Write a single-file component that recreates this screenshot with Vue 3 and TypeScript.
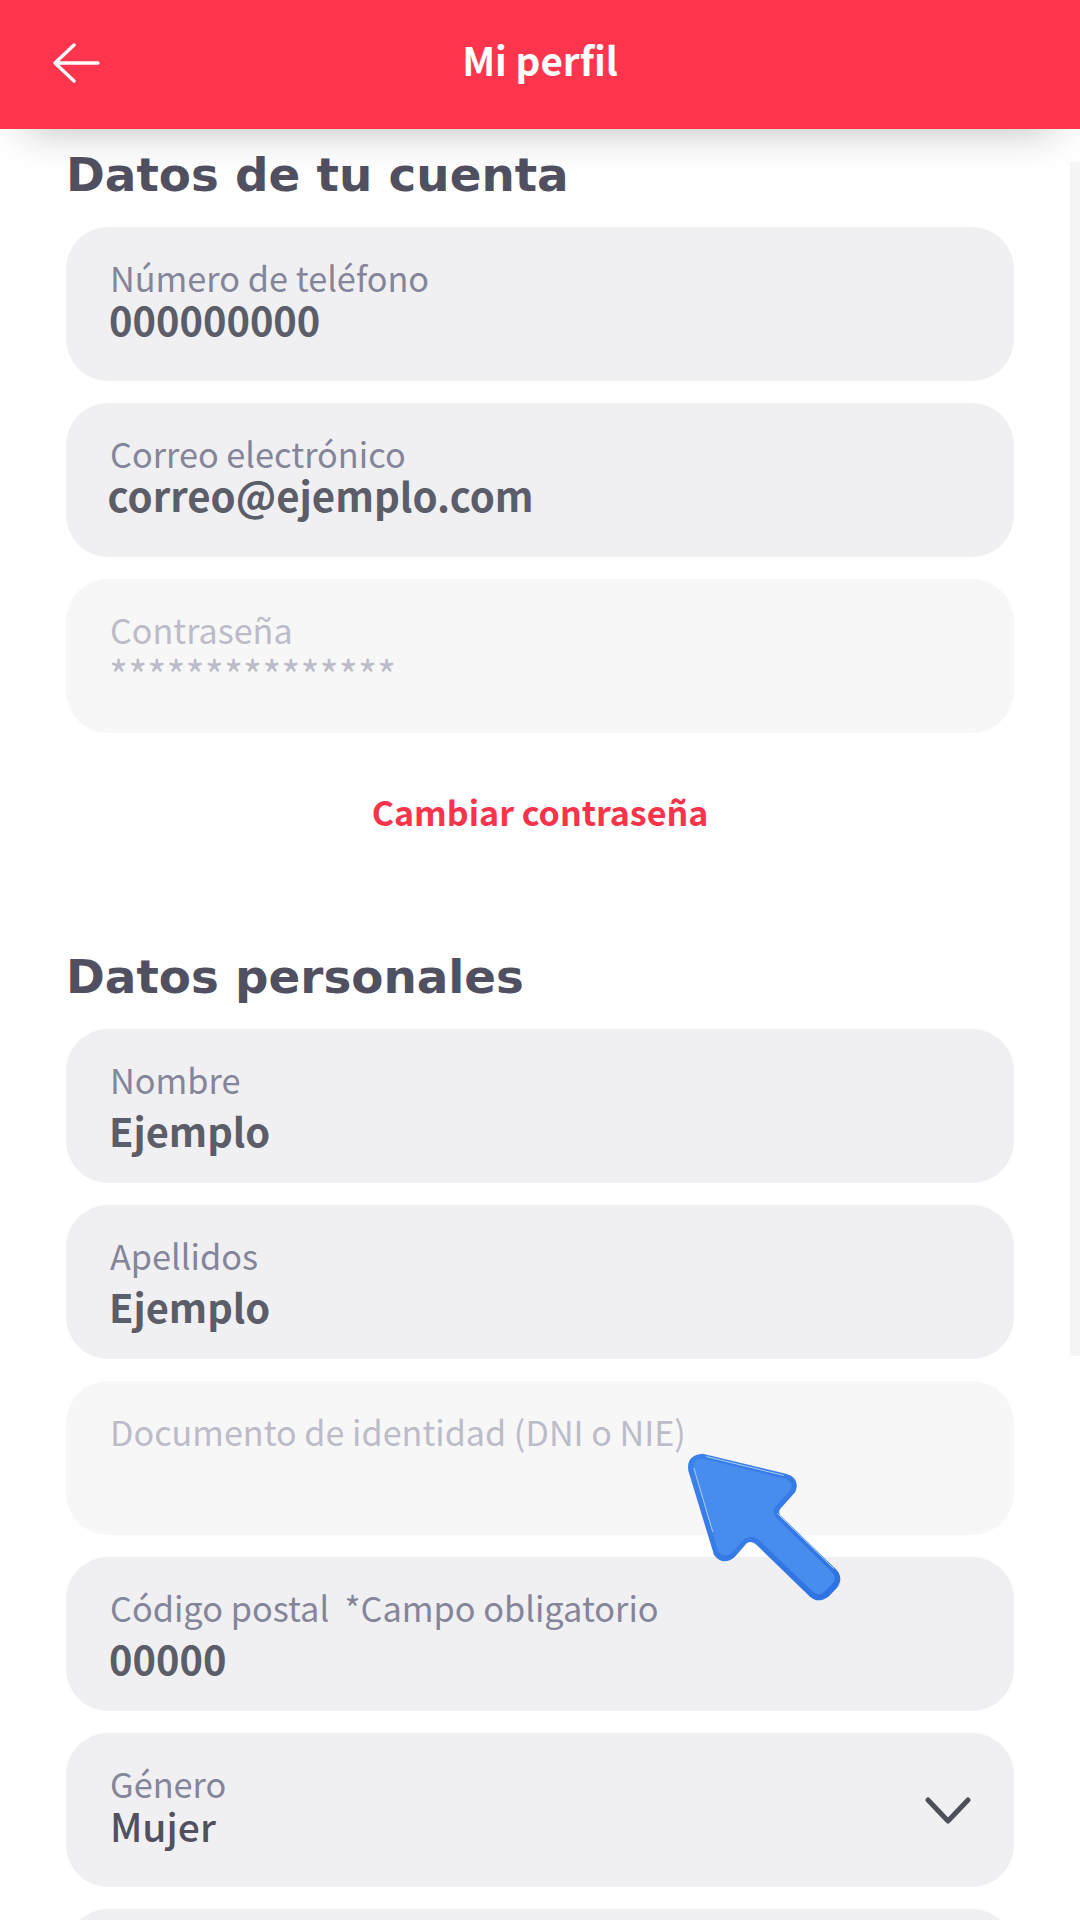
<script setup lang="ts">
interface Field {
  label: string
  value?: string
  kind?: string
  muted?: boolean
  chevron?: boolean
}
const account: Field[] = [
  { label: 'Número de teléfono', value: '000000000', kind: 'tight' },
  { label: 'Correo electrónico', value: 'correo@ejemplo.com', kind: 'tight email' },
  { label: 'Contraseña', value: '***************', kind: 'mask', muted: true },
]
const personal: Field[] = [
  { label: 'Nombre', value: 'Ejemplo' },
  { label: 'Apellidos', value: 'Ejemplo' },
  { label: 'Documento de identidad (DNI o NIE)', muted: true },
  { label: 'Código postal  *Campo obligatorio', value: '00000' },
  { label: 'Género', value: 'Mujer', kind: 'tight medium', chevron: true },
  { label: '' },
]
</script>

<template>
  <div class="screen">
    <header class="bar">
      <svg class="back" viewBox="0 0 48 40" width="48" height="40" fill="none" stroke="#fff" stroke-width="3.4" stroke-linecap="round" stroke-linejoin="round">
        <path d="M46 20H3M22 2 3 20l19 18" />
      </svg>
      <h1 class="title">Mi perfil</h1>
    </header>

    <main class="content">
      <h2 class="heading">Datos de tu cuenta</h2>
      <div class="fields">
        <div v-for="f in account" :key="f.label" class="field" :class="{ muted: f.muted }">
          <div class="label">{{ f.label }}</div>
          <div class="value" :class="f.kind">{{ f.value }}</div>
        </div>
      </div>
      <a class="link">Cambiar contraseña</a>
      <h2 class="heading">Datos personales</h2>
      <div class="fields">
        <div v-for="(f, i) in personal" :key="i" class="field" :class="{ muted: f.muted }">
          <div class="label">{{ f.label }}</div>
          <div class="value" :class="f.kind">{{ f.value }}</div>
          <svg v-if="f.chevron" class="chevron" viewBox="0 0 46 28" width="46" height="28" fill="none" stroke="#4f4f5c" stroke-width="5" stroke-linecap="round" stroke-linejoin="round">
            <path d="M3 3 23 24 43 3" />
          </svg>
        </div>
      </div>
    </main>

    <div class="scroll"></div>

    <svg class="pointer" viewBox="0 0 720 720" width="240" height="240">
      <defs>
        <linearGradient id="edge" x1="0" y1="0" x2="1" y2="1">
          <stop offset="0" stop-color="#3b82ea" />
          <stop offset="1" stop-color="#2f72e2" />
        </linearGradient>
      </defs>
      <path fill="url(#edge)" d="M188 161 440 222Q482 235 466 276L421 326Q412 340 425 350L590 510Q612 535 590 565L565 590Q535 612 510 590L350 435Q335 420 320 430L285 470Q250 500 222 465L145 212Q138 165 188 161Z" />
      <path fill="#488cee" d="M186 176 436 236Q462 244 452 270L405 322Q394 340 410 355L575 515Q592 535 576 553L552 576Q535 590 520 576L356 420Q335 402 312 418L276 458Q250 478 234 452L160 208Q156 176 186 176Z" />
      <path fill="none" stroke="#a9cdf8" stroke-width="3" stroke-linecap="round" d="M162 205 218 395M200 170 430 226M412 340 580 505" />
    </svg>
  </div>
</template>

<style>
html,
body {
  margin: 0;
  background: #fff;
}
</style>

<style scoped>
.screen {
  position: relative;
  width: 1080px;
  height: 1920px;
  overflow: hidden;
  background: #fff;
  font-family: "Noto Sans CJK JP", "Noto Sans", sans-serif;
}
.bar {
  position: relative;
  z-index: 2;
  height: 129px;
  display: flex;
  align-items: center;
  justify-content: center;
  background: #ff354e;
  box-shadow: 0 26px 44px -26px rgba(0, 0, 0, 0.28);
}
.back {
  position: absolute;
  left: 52px;
  top: 43px;
}
.title {
  margin: 0 0 10px;
  color: #fff;
  font-size: 38.6px;
  line-height: 1;
  font-weight: 700;
}
.content {
  padding: 0 66px;
  display: flex;
  flex-direction: column;
}
.heading {
  margin: 10.5px 0 17.5px;
  height: 70px;
  line-height: 70px;
  font-family: "DejaVu Sans", "Inter", sans-serif;
  font-size: 46.8px;
  font-weight: 700;
  color: #505060;
}
.fields {
  display: flex;
  flex-direction: column;
  gap: 22px;
}
.field {
  position: relative;
  box-sizing: border-box;
  height: 154px;
  padding: 32px 44px 0;
  border-radius: 42px;
  background: #f0f0f3;
}
.field.muted {
  background: #f7f7f8;
}
.label {
  height: 36px;
  line-height: 36px;
  font-size: 34.3px;
  color: #85859a;
  white-space: pre;
}
.muted .label {
  font-size: 34.15px;
  color: #bcbcc8;
}
.value {
  margin-top: 12.5px;
  margin-left: -1px;
  height: 40px;
  line-height: 40px;
  font-size: 39.8px;
  font-weight: 700;
  color: #5b5d68;
}
.value.tight {
  margin-top: 3.5px;
}
.value.email {
  margin-left: -2.5px;
  font-size: 40.2px;
}
.value.medium {
  margin-left: 0;
  font-size: 39px;
  font-weight: 500;
  color: #50505e;
}
.value.mask {
  margin-top: 5.5px;
  margin-left: -1px;
  font-size: 41px;
  font-weight: 400;
  color: #bcbcc8;
}
.chevron {
  position: absolute;
  right: 43px;
  top: 64px;
}
.link {
  margin: 57px 0 97px;
  height: 44px;
  line-height: 44px;
  text-align: center;
  font-size: 34px;
  font-weight: 700;
  color: #f8334c;
}
.scroll {
  position: absolute;
  right: 0;
  top: 162px;
  width: 10px;
  height: 1194px;
  background: #f5f5f6;
}
.pointer {
  position: absolute;
  left: 640px;
  top: 1400px;
}
</style>
